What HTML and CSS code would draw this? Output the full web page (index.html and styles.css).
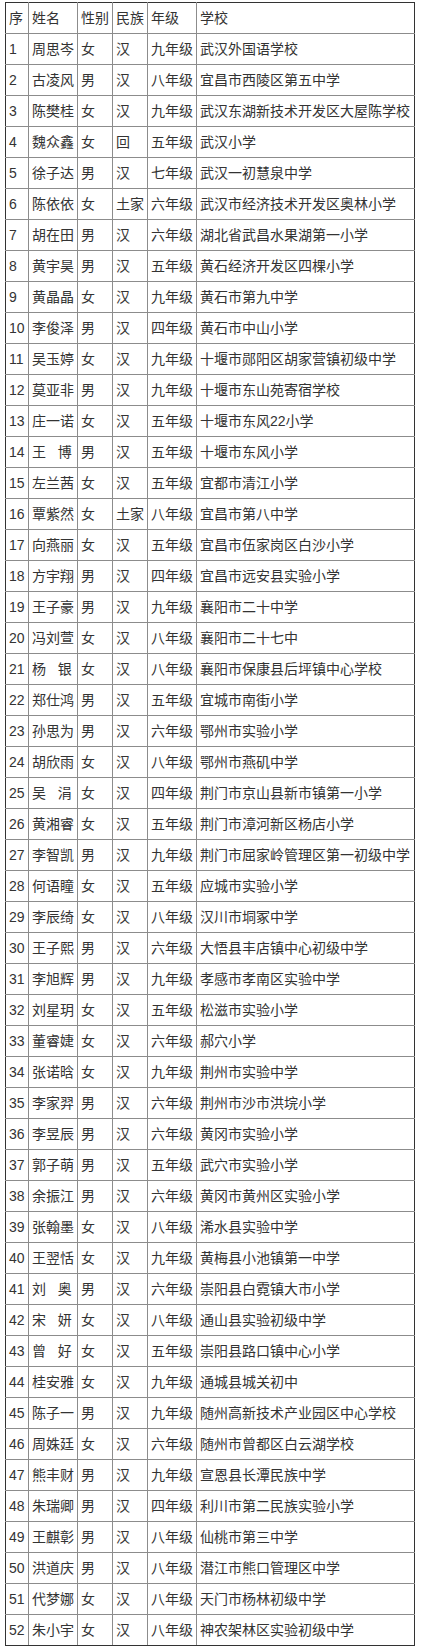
FILE: index.html
```html
<!DOCTYPE html>
<html lang="zh">
<head>
<meta charset="utf-8">
<title>名单</title>
<link rel="stylesheet" href="styles.css">
</head>
<body>
<table class="list">
<colgroup><col class="c-no"><col class="c-name"><col class="c-sex"><col class="c-eth"><col class="c-grade"><col class="c-school"></colgroup>
<tr><td>序</td><td>姓名</td><td>性别</td><td>民族</td><td>年级</td><td>学校</td></tr>
<tr><td>1</td><td>周思岑</td><td>女</td><td>汉</td><td>九年级</td><td>武汉外国语学校</td></tr>
<tr><td>2</td><td>古凌风</td><td>男</td><td>汉</td><td>八年级</td><td>宜昌市西陵区第五中学</td></tr>
<tr><td>3</td><td>陈樊桂</td><td>女</td><td>汉</td><td>九年级</td><td>武汉东湖新技术开发区大屋陈学校</td></tr>
<tr><td>4</td><td>魏众鑫</td><td>女</td><td>回</td><td>五年级</td><td>武汉小学</td></tr>
<tr><td>5</td><td>徐子达</td><td>男</td><td>汉</td><td>七年级</td><td>武汉一初慧泉中学</td></tr>
<tr><td>6</td><td>陈依依</td><td>女</td><td>土家</td><td>六年级</td><td>武汉市经济技术开发区奥林小学</td></tr>
<tr><td>7</td><td>胡在田</td><td>男</td><td>汉</td><td>六年级</td><td>湖北省武昌水果湖第一小学</td></tr>
<tr><td>8</td><td>黄宇昊</td><td>男</td><td>汉</td><td>五年级</td><td>黄石经济开发区四棵小学</td></tr>
<tr><td>9</td><td>黄晶晶</td><td>女</td><td>汉</td><td>九年级</td><td>黄石市第九中学</td></tr>
<tr><td>10</td><td>李俊泽</td><td>男</td><td>汉</td><td>四年级</td><td>黄石市中山小学</td></tr>
<tr><td>11</td><td>吴玉婷</td><td>女</td><td>汉</td><td>九年级</td><td>十堰市郧阳区胡家营镇初级中学</td></tr>
<tr><td>12</td><td>莫亚非</td><td>男</td><td>汉</td><td>九年级</td><td>十堰市东山苑寄宿学校</td></tr>
<tr><td>13</td><td>庄一诺</td><td>女</td><td>汉</td><td>五年级</td><td>十堰市东风22小学</td></tr>
<tr><td>14</td><td>王&nbsp;&nbsp;&nbsp;博</td><td>男</td><td>汉</td><td>五年级</td><td>十堰市东风小学</td></tr>
<tr><td>15</td><td>左兰茜</td><td>女</td><td>汉</td><td>五年级</td><td>宜都市清江小学</td></tr>
<tr><td>16</td><td>覃紫然</td><td>女</td><td>土家</td><td>八年级</td><td>宜昌市第八中学</td></tr>
<tr><td>17</td><td>向燕丽</td><td>女</td><td>汉</td><td>五年级</td><td>宜昌市伍家岗区白沙小学</td></tr>
<tr><td>18</td><td>方宇翔</td><td>男</td><td>汉</td><td>四年级</td><td>宜昌市远安县实验小学</td></tr>
<tr><td>19</td><td>王子豪</td><td>男</td><td>汉</td><td>九年级</td><td>襄阳市二十中学</td></tr>
<tr><td>20</td><td>冯刘萱</td><td>女</td><td>汉</td><td>八年级</td><td>襄阳市二十七中</td></tr>
<tr><td>21</td><td>杨&nbsp;&nbsp;&nbsp;银</td><td>女</td><td>汉</td><td>八年级</td><td>襄阳市保康县后坪镇中心学校</td></tr>
<tr><td>22</td><td>郑仕鸿</td><td>男</td><td>汉</td><td>五年级</td><td>宜城市南街小学</td></tr>
<tr><td>23</td><td>孙思为</td><td>男</td><td>汉</td><td>六年级</td><td>鄂州市实验小学</td></tr>
<tr><td>24</td><td>胡欣雨</td><td>女</td><td>汉</td><td>八年级</td><td>鄂州市燕矶中学</td></tr>
<tr><td>25</td><td>吴&nbsp;&nbsp;&nbsp;涓</td><td>女</td><td>汉</td><td>四年级</td><td>荆门市京山县新市镇第一小学</td></tr>
<tr><td>26</td><td>黄湘睿</td><td>女</td><td>汉</td><td>五年级</td><td>荆门市漳河新区杨店小学</td></tr>
<tr><td>27</td><td>李智凯</td><td>男</td><td>汉</td><td>九年级</td><td>荆门市屈家岭管理区第一初级中学</td></tr>
<tr><td>28</td><td>何语瞳</td><td>女</td><td>汉</td><td>五年级</td><td>应城市实验小学</td></tr>
<tr><td>29</td><td>李辰绮</td><td>女</td><td>汉</td><td>八年级</td><td>汉川市垌冢中学</td></tr>
<tr><td>30</td><td>王子熙</td><td>男</td><td>汉</td><td>六年级</td><td>大悟县丰店镇中心初级中学</td></tr>
<tr><td>31</td><td>李旭辉</td><td>男</td><td>汉</td><td>九年级</td><td>孝感市孝南区实验中学</td></tr>
<tr><td>32</td><td>刘星玥</td><td>女</td><td>汉</td><td>五年级</td><td>松滋市实验小学</td></tr>
<tr><td>33</td><td>董睿婕</td><td>女</td><td>汉</td><td>六年级</td><td>郝穴小学</td></tr>
<tr><td>34</td><td>张诺晗</td><td>女</td><td>汉</td><td>九年级</td><td>荆州市实验中学</td></tr>
<tr><td>35</td><td>李家羿</td><td>男</td><td>汉</td><td>六年级</td><td>荆州市沙市洪垸小学</td></tr>
<tr><td>36</td><td>李昱辰</td><td>男</td><td>汉</td><td>六年级</td><td>黄冈市实验小学</td></tr>
<tr><td>37</td><td>郭子萌</td><td>男</td><td>汉</td><td>五年级</td><td>武穴市实验小学</td></tr>
<tr><td>38</td><td>余振江</td><td>男</td><td>汉</td><td>六年级</td><td>黄冈市黄州区实验小学</td></tr>
<tr><td>39</td><td>张翰墨</td><td>女</td><td>汉</td><td>八年级</td><td>浠水县实验中学</td></tr>
<tr><td>40</td><td>王翌恬</td><td>女</td><td>汉</td><td>九年级</td><td>黄梅县小池镇第一中学</td></tr>
<tr><td>41</td><td>刘&nbsp;&nbsp;&nbsp;奥</td><td>男</td><td>汉</td><td>六年级</td><td>崇阳县白霓镇大市小学</td></tr>
<tr><td>42</td><td>宋&nbsp;&nbsp;&nbsp;妍</td><td>女</td><td>汉</td><td>八年级</td><td>通山县实验初级中学</td></tr>
<tr><td>43</td><td>曾&nbsp;&nbsp;&nbsp;好</td><td>女</td><td>汉</td><td>五年级</td><td>崇阳县路口镇中心小学</td></tr>
<tr><td>44</td><td>桂安雅</td><td>女</td><td>汉</td><td>九年级</td><td>通城县城关初中</td></tr>
<tr><td>45</td><td>陈子一</td><td>男</td><td>汉</td><td>九年级</td><td>随州高新技术产业园区中心学校</td></tr>
<tr><td>46</td><td>周姝廷</td><td>女</td><td>汉</td><td>六年级</td><td>随州市曾都区白云湖学校</td></tr>
<tr><td>47</td><td>熊丰财</td><td>男</td><td>汉</td><td>九年级</td><td>宣恩县长潭民族中学</td></tr>
<tr><td>48</td><td>朱瑞卿</td><td>男</td><td>汉</td><td>四年级</td><td>利川市第二民族实验小学</td></tr>
<tr><td>49</td><td>王麒彰</td><td>男</td><td>汉</td><td>八年级</td><td>仙桃市第三中学</td></tr>
<tr><td>50</td><td>洪道庆</td><td>男</td><td>汉</td><td>八年级</td><td>潜江市熊口管理区中学</td></tr>
<tr><td>51</td><td>代梦娜</td><td>女</td><td>汉</td><td>八年级</td><td>天门市杨林初级中学</td></tr>
<tr><td>52</td><td>朱小宇</td><td>女</td><td>汉</td><td>八年级</td><td>神农架林区实验初级中学</td></tr>
</table>
</body>
</html>
```
FILE: styles.css
```css
html, body {
  margin: 0;
  padding: 0;
  background: #ffffff;
}
body {
  padding: 2px 0 0 5px;
}
.list {
  border-collapse: collapse;
  table-layout: fixed;
  width: 409px;
  border: 1px solid #333333;
  font-family: "Liberation Sans", "Noto Sans CJK SC", sans-serif;
  font-size: 14px;
  color: #333333;
}
.c-no { width: 23px; }
.c-name { width: 49px; }
.c-sex { width: 35px; }
.c-eth { width: 35px; }
.c-grade { width: 49px; }
.c-school { width: 218px; }
.list tr {
  height: 31px;
}
.list td {
  border: 1px solid #8c8c8c;
  padding: 0 0 0 3px;
  vertical-align: middle;
  white-space: nowrap;
  overflow: hidden;
  line-height: 18px;
}
.list tr:first-child td { border-top-color: #333333; }
.list tr:last-child td { border-bottom-color: #333333; }
.list td:first-child { border-left-color: #333333; }
.list td:last-child { border-right-color: #333333; }
```
